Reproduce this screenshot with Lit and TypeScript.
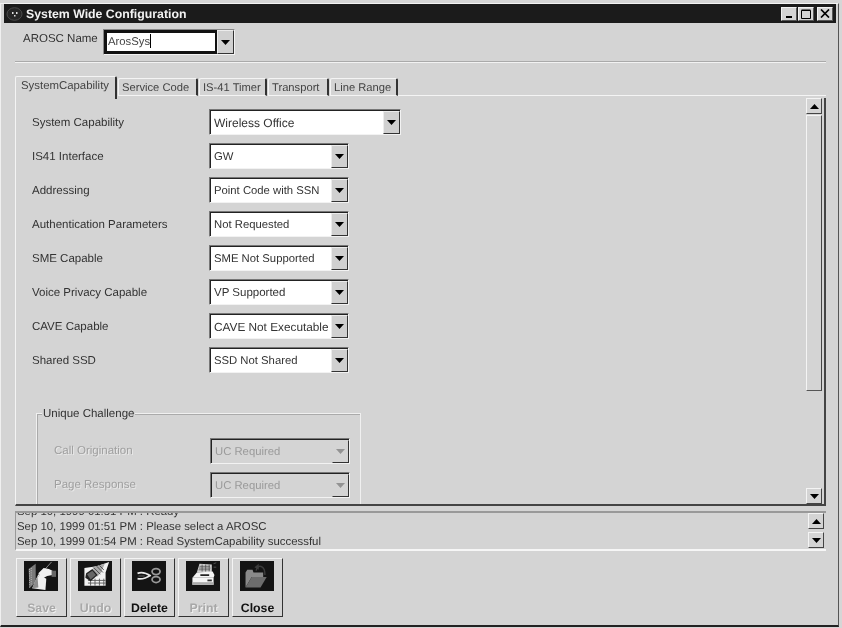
import { LitElement, html, css, svg } from "lit";
import { customElement } from "lit/decorators.js";

const arrowUp = html`<svg width="9" height="5" viewBox="0 0 9 5"><path d="M4.5 0 9 5H0z" fill="#000"/></svg>`;
const arrowDown = html`<svg width="9" height="5" viewBox="0 0 9 5"><path d="M0 0h9L4.5 5z" fill="#000"/></svg>`;

const icons: Record<string, unknown> = {
  Save: svg`<path d="M3 9 11 3 11 24 4 31z" fill="#7a7a7a"/><path d="M4 9v21M6 8v20" stroke="#ddd" stroke-width=".8" stroke-dasharray="1 1.5"/>
    <path d="M7 31 14 15 23 20 22 33z" fill="#f0f0f0"/><path d="M7 31 13 17 14 30z" fill="#8c8c8c"/>
    <path d="M12 20 29 1" stroke="#bbb" stroke-width=".8"/><path d="M14 14 20 8 26 9 30 11 30 16 24 17 18 20z" fill="#f0f0f0"/><path d="M29 11h5v7h-5z" fill="#666"/>`,
  Undo: svg`<path d="M5 8 19 6 33 1 29 13 29 28 5 28z" fill="#f2f2f2"/>
    <path d="M9 22h20M9 25h20M12 20v8M17 20v8M22 20v8M27 20v8" stroke="#555" stroke-width="1"/>
    <path d="M14 7 28 3 24 13 19 18z" fill="#aaa"/><path d="M16 8l7 7M19 6l7 7M22 5l5 5" stroke="#444" stroke-width="1"/>
    <path d="M7 14 14 9 20 16 12 23 6 19z" fill="#222"/><path d="M8 15 14 11 18 16 12 21z" fill="#666"/>`,
  Delete: svg`<path d="M4 14C9 12 13 13 19 17M4 20C9 21 13 20 19 16" fill="none" stroke="#e8e8e8" stroke-width="2"/>
    <path d="M5 17h7" stroke="#666" stroke-width="1"/>
    <ellipse cx="25" cy="12" rx="4.5" ry="3.4" fill="none" stroke="#999" stroke-width="2"/>
    <ellipse cx="25" cy="21" rx="4.5" ry="3.4" fill="none" stroke="#999" stroke-width="2"/>`,
  Print: svg`<path d="M10 13 13 3 27 4 27 13z" fill="#cfcfcf"/><path d="M13 6h12M12.5 8h13M12 10h13M16 4v8M20 4v8M24 4v8" stroke="#444" stroke-width=".8"/>
    <path d="M5 19 10 13 28 12 30 16 29 19z" fill="#f4f4f4"/><path d="M14 15h10v2H14z" fill="#222"/>
    <path d="M5 19H29V27H5z" fill="#f4f4f4"/><path d="M5 24H29V27H5z" fill="#aaa"/><path d="M22 21h5v2h-5z" fill="#333"/>
    <path d="M29 3l3-1M29 7l3 0" stroke="#777" stroke-width=".7"/>`,
  Close: svg`<path d="M4 13 6 10 12 10 13 13 24 13 24 18 11 18 4 30z" fill="#8a8a8a"/>
    <path d="M4 30 11 18 28 18 21 30z" fill="#6d6d6d"/>
    <path d="M16 11C17 6 20 5 23 7C26 9 26 12 26 16" fill="none" stroke="#3c3c3c" stroke-width="1.6"/><path d="M19 3 14 7 19 10z" fill="#3c3c3c"/>`,
};

@customElement("app-combo")
class AppCombo extends LitElement {
  static properties = { value: {}, fs: {}, disabled: { type: Boolean, reflect: true }, focused: { type: Boolean, reflect: true } };
  value = "";
  fs = "";
  disabled = false;
  focused = false;
  static styles = css`
    :host { display: block; width: 140px; height: 26px; margin-top: -2px; box-sizing: border-box; border: 1px solid; border-color: #777 #f2f2f2 #f2f2f2 #777; text-rendering: geometricPrecision; }
    .in { display: flex; height: 100%; background: #fff; border-left: 1px solid #222; border-top: 1px solid #222; box-sizing: border-box; }
    .txt { flex: 1; min-width: 0; padding: 0 0 0 3px; font: 11.3px/25px "Liberation Sans", Arial, sans-serif; color: #333; white-space: nowrap; overflow: hidden; }
    .btn { width: 17px; flex: none; display: flex; align-items: center; justify-content: center; background: #d0d0d0; box-sizing: border-box; border: 1px solid; border-color: #ececec #333 #333 #ececec; }
    :host([disabled]) .in { background: #d4d4d4; position: relative; }
    :host([disabled]) .txt { color: #9a9a9a; padding-left: 3px; }
    :host([disabled]) .btn { background: #d4d4d4; border-color: transparent #333 #333 transparent; }
    :host([disabled]) .btn svg { opacity: .3; }
    :host([focused]) { margin-top: 0; border-color: #888 #f2f2f2 #f2f2f2 #888; }
    :host([focused]) .in { border: none; background: #d0d0d0; }
    :host([focused]) .txt { background: #fff; border: 3px solid #111; border-right-width: 2px; line-height: 18px; padding-left: 1px; color: #444; }
    :host([focused]) .caret { display: inline-block; width: 1px; height: 14px; background: #000; vertical-align: -3px; }
  `;
  render() {
    const st = this.fs ? `font-size:${this.fs}px` : "";
    return html`<div class="in"><div class="txt" style=${st}>${this.value}${this.focused ? html`<span class="caret"></span>` : ""}</div><div class="btn">${arrowDown}</div></div>`;
  }
}

@customElement("app-root")
export class AppRoot extends LitElement {
  static styles = css`
    :host { display: block; width: 842px; height: 628px; box-sizing: border-box; background: #d6d6d6; padding: 3px 3px 1px 0; font: 11.5px "Liberation Sans", Arial, sans-serif; color: #333; overflow: hidden; text-rendering: geometricPrecision; }
    .win { height: 100%; box-sizing: border-box; background: #d4d4d4; border-top: 1px solid #f4f4f4; border-left: 1px solid #f0f0f0; border-right: 1px solid #555; border-bottom: 2px solid #222; padding: 0 2px 0 3px; display: flex; flex-direction: column; filter: blur(.35px); }
    .title { height: 19px; flex: none; background: #1b1b1b; color: #f2f2f2; display: flex; align-items: center; padding: 0 3px 0 2px; gap: 3px; font: bold 12.3px "Liberation Sans", Arial, sans-serif; }
    .title .sp { flex: 1; }
    .wb { display: flex; }
    .wbtn { width: 16px; height: 14px; background: #d4d4d4; box-sizing: border-box; border: 1px solid; border-color: #f2f2f2 #555 #555 #f2f2f2; display: flex; align-items: center; justify-content: center; }
    .wbtn.max { margin-left: 1px; }
    .wbtn.close { margin-left: 3px; }
    .name { display: flex; align-items: center; margin: 6px 0 0 19px; height: 26px; flex: none; }
    .name span { width: 80px; margin-top: -7px; }
    .name app-combo { width: 132px; height: 26px; }
    .sep { margin: 6px 10px 0 11px; height: 1px; background: #aaa; border-bottom: 1px solid #f2f2f2; flex: none; }
    .tabs { display: flex; align-items: flex-end; height: 23px; margin: 12px 10px 0 11px; flex: none; position: relative; }
    .tabs::after { content: ""; flex: 1; height: 1px; background: #f4f4f4; margin-bottom: 2px; }
    .tab { height: 18px; margin-bottom: 2px; box-sizing: border-box; padding: 0 0 0 3px; line-height: 18px; border-left: 1px solid #f4f4f4; border-top: 1px solid #f4f4f4; border-right: 2px solid #333; border-radius: 2px 2px 0 0; border-bottom: 1px solid #f4f4f4; color: #444; font-size: 11.2px; white-space: nowrap; margin-left: 1px; flex: none; }
    .tab.on { height: 23px; margin: 0 0 -1px 0; padding: 0 0 0 5px; line-height: 18px; font-size: 11.4px; border-bottom: none; background: #d4d4d4; position: relative; z-index: 1; }
    .panel { height: 408px; flex: none; box-sizing: border-box; margin: 0 10px 0 11px; border-left: 1px solid #f4f4f4; border-right: 2px solid #444; border-bottom: 2px solid #444; display: flex; overflow: hidden; }
    .body { flex: 1; min-width: 0; padding: 7px 0 0 16px; overflow: hidden; }
    .row { display: flex; align-items: center; height: 34px; }
    .row.first { height: 35px; }
    .row label { width: 177px; flex: none; }
    .wide { width: 192px; }
    .group { margin: 35px 0 0 4px; width: 325px; height: 110px; box-sizing: border-box; border: 1px solid #f0f0f0; box-shadow: inset 1px 1px 0 #aaa; position: relative; padding: 21px 0 0 17px; }
    .group .lg { position: absolute; top: -7px; left: 5px; background: #d4d4d4; padding: 0 1px; line-height: 14px; }
    .group label { width: 156px; color: #a0a0a0; text-shadow: 1px 1px 0 #e8e8e8; margin-top: -2px; }
    .sb { width: 16px; flex: none; display: flex; flex-direction: column; margin-right: 2px; }
    .sb .ab { height: 16px; box-sizing: border-box; flex: none; background: #d4d4d4; border: 1px solid; border-color: #f4f4f4 #444 #444 #f4f4f4; display: flex; align-items: center; justify-content: center; }
    .sb .thumb { height: 276px; flex: none; margin-top: 1px; box-sizing: border-box; border: 1px solid; border-color: #f4f4f4 #444 #555 #f4f4f4; }
    .sb .gap { flex: 1; }
    .log { height: 40px; flex: none; margin: 5px 10px 0 11px; box-sizing: border-box; border-top: 2px solid #999; border-left: 1px solid #999; border-bottom: 2px solid #f6f6f6; display: flex; overflow: hidden; }
    .lines { flex: 1; overflow: hidden; display: flex; flex-direction: column; justify-content: flex-end; padding: 0 0 0 1px; font-size: 11.4px; line-height: 15px; white-space: nowrap; height: 37px; }
    .lsb { width: 16px; flex: none; margin-right: 2px; display: flex; flex-direction: column; gap: 3px; }
    .lsb .ab { height: 16px; box-sizing: border-box; background: #d4d4d4; border: 1px solid; border-color: #f4f4f4 #444 #444 #f4f4f4; display: flex; align-items: center; justify-content: center; }
    .tools { display: flex; gap: 3px; margin: 7px 0 0 12px; flex: none; }
    .tool { width: 51px; height: 59px; box-sizing: border-box; border: 1px solid; border-color: #f4f4f4 #333 #333 #f4f4f4; display: flex; flex-direction: column; align-items: center; padding-top: 2px; font: bold 12.3px/16px "Liberation Sans", Arial, sans-serif; color: #111; }
    .tool svg { display: block; background: #141414; margin: 0 1px 9px 0; }
    .tool.dis { color: #a8a8a8; text-shadow: 1px 1px 0 #f0f0f0; }
  `;

  render() {
    const rows: [string, string, string][] = [
      ["IS41 Interface", "GW", ""],
      ["Addressing", "Point Code with SSN", ""],
      ["Authentication Parameters", "Not Requested", ""],
      ["SME Capable", "SME Not Supported", ""],
      ["Voice Privacy Capable", "VP Supported", "11.5"],
      ["CAVE Capable", "CAVE Not Executable", "11.8"],
      ["Shared SSD", "SSD Not Shared", ""],
    ];
    const tabs: [string, number][] = [["SystemCapability", 102], ["Service Code", 80], ["IS-41 Timer", 68], ["Transport", 61], ["Line Range", 68]];
    const tools: [string, boolean][] = [["Save", true], ["Undo", true], ["Delete", false], ["Print", true], ["Close", false]];
    return html`<div class="win">
      <div class="title">
        <svg width="17" height="14" viewBox="0 0 17 14"><ellipse cx="8.5" cy="7" rx="7.5" ry="6.3" fill="#262626" stroke="#555" stroke-width=".8"/><path d="M6 5h1.5v2H6zM10 5h1.5v2H10zM8 8h1.5v1.5H8z" fill="#ddd"/></svg>
        <span>System Wide Configuration</span><span class="sp"></span>
        <div class="wb">
          <div class="wbtn"><svg width="8" height="8" viewBox="0 0 8 8"><path d="M1 6h6v2H1z" fill="#000"/></svg></div>
          <div class="wbtn max"><svg width="10" height="10" viewBox="0 0 10 10"><path d="M.5 1.5h9v8h-9z M.5 1h9" fill="none" stroke="#000"/></svg></div>
          <div class="wbtn close"><svg width="10" height="9" viewBox="0 0 10 9"><path d="M1 .5 9 8.5M9 .5 1 8.5" stroke="#000" stroke-width="1.7"/></svg></div>
        </div>
      </div>
      <div class="name"><span>AROSC Name</span><app-combo value="ArosSys" focused></app-combo></div>
      <div class="sep"></div>
      <div class="tabs">
        ${tabs.map(([t, w], i) => html`<div class="tab ${i === 0 ? "on" : ""}" style="width:${w}px">${t}</div>`)}
      </div>
      <div class="panel">
        <div class="body">
          <div class="row first"><label>System Capability</label><app-combo class="wide" value="Wireless Office" fs="12"></app-combo></div>
          ${rows.map(([l, v, f]) => html`<div class="row"><label>${l}</label><app-combo value=${v} fs=${f}></app-combo></div>`)}
          <div class="group">
            <span class="lg">Unique Challenge</span>
            <div class="row"><label>Call Origination</label><app-combo value="UC Required" disabled></app-combo></div>
            <div class="row"><label>Page Response</label><app-combo value="UC Required" disabled></app-combo></div>
          </div>
        </div>
        <div class="sb">
          <div class="ab">${arrowUp}</div><div class="thumb"></div><div class="gap"></div><div class="ab">${arrowDown}</div>
        </div>
      </div>
      <div class="log">
        <div class="lines">
          <div>Sep 10, 1999 01:51 PM : Ready</div>
          <div>Sep 10, 1999 01:51 PM : Please select a AROSC</div>
          <div>Sep 10, 1999 01:54 PM : Read SystemCapability successful</div>
        </div>
        <div class="lsb"><div class="ab">${arrowUp}</div><div class="ab">${arrowDown}</div></div>
      </div>
      <div class="tools">
        ${tools.map(([n, d]) => html`<div class="tool ${d ? "dis" : ""}"><svg width="34" height="34" viewBox="0 0 34 34">${icons[n]}</svg><span>${n}</span></div>`)}
      </div>
    </div>`;
  }
}
void AppCombo;
